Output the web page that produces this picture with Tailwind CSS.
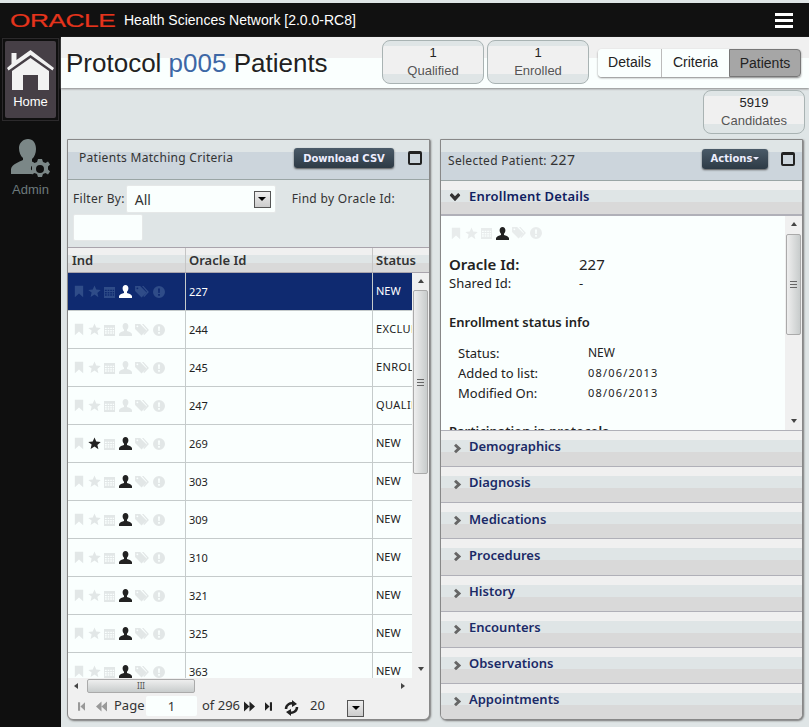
<!DOCTYPE html>
<html lang="en">
<head>
<meta charset="UTF-8">
<title>Health Sciences Network</title>
<script src="https://cdn.jsdelivr.net/npm/@tailwindcss/browser@4"></script>
</head>
<body class="w-[809px] h-[727px] overflow-hidden bg-[#0f0f0f] font-['Liberation_Sans',sans-serif]">
<svg class="hidden">
  <symbol id="bookmark" viewBox="0 0 12 14"><path fill="currentColor" d="M1 0h10v14L6 9.500 1 14z"/></symbol>
  <symbol id="star" viewBox="0 0 14 14"><path fill="currentColor" d="M7 .5l1.900 4.400 4.800.4-3.600 3.200 1.100 4.700L7 10.300l-4.200 2.500 1.100-4.700L.3 5.300l4.800-.4z"/></symbol>
  <symbol id="calendar" viewBox="0 0 12 13"><path fill="currentColor" d="M0 1h12v12H0zM1 4v1.500h2V4zm3 0v1.500h1.800V4zm2.800 0v1.500h1.800V4zm2.700 0v1.500H11V4zM1 6.500V8h2V6.500zm3 0V8h1.800V6.500zm2.800 0V8h1.800V6.500zm2.700 0V8H11V6.500zM1 9v1.500h2V9zm3 0v1.500h1.800V9zm2.800 0v1.500h1.800V9zm2.700 0v1.500H11V9z"/></symbol>
  <symbol id="user" viewBox="0 0 13 13"><path fill="currentColor" d="M6.500 0C8.300 0 9.400 1.300 9.400 3.200c0 1.500-.6 2.800-1.400 3.500v1.200c1.800.6 4.400 1.300 5 3.100v2H0v-2c.6-1.800 3.200-2.500 5-3.100V6.700C4.200 6 3.600 4.700 3.600 3.200 3.600 1.300 4.700 0 6.500 0z"/></symbol>
  <symbol id="tags" viewBox="0 0 15 13"><path fill="currentColor" d="M0 0h5.500l7 7-5.500 5.500-7-7zm2.500 1.500a1 1 0 100 2 1 1 0 000-2zM7.500 0h1.600l5.900 6.500-5 5.500-1-1 4-4.500z"/></symbol>
  <symbol id="alert" viewBox="0 0 12 12"><path fill="currentColor" fill-rule="evenodd" d="M6 0a6 6 0 110 12A6 6 0 016 0zM5 2.500l.3 4.500h1.400L7 2.500zM5.100 8v1.700h1.800V8z"/></symbol>
  <symbol id="chev" viewBox="0 0 10 12"><path fill="currentColor" d="M2.500 0L9 6l-6.500 6L0 9.500 3.700 6 0 2.500z"/></symbol>
  <symbol id="first" viewBox="0 0 10 12"><path fill="currentColor" d="M0 0h3v12H0zM3.500 6L10 0v12z"/></symbol>
  <symbol id="prev" viewBox="0 0 12 12"><path fill="currentColor" d="M0 6l6-5.500v11zM6 6l6-5.500v11z"/></symbol>
</svg>

<!-- top bar -->
<header class="h-[37px] border-t-[3px] border-[#dfe5e6] bg-[#111] flex items-center pl-[10px] pr-[16px] text-white">
  <span class="w-[103px] text-[#e5341c] text-[19px] leading-none origin-left scale-x-[1.38] tracking-[-0.3px] [-webkit-text-stroke:0.2px_#e5341c]">ORACLE</span>
  <span class="ml-[11px] text-[14px]">Health Sciences Network [2.0.0-RC8]</span>
  <div class="ml-auto flex flex-col gap-[3px]">
    <div class="w-[18px] h-[3px] bg-white"></div>
    <div class="w-[18px] h-[3px] bg-white"></div>
    <div class="w-[18px] h-[3px] bg-white"></div>
  </div>
</header>

<div class="flex h-[690px]">
  <!-- side nav -->
  <nav class="w-[61px] shrink-0 bg-[#0f0f0f] pt-[1px]">
    <div class="mx-[2px] h-[83px] border border-[#2c2a2c] p-[2px]">
      <div class="h-full bg-[#463f46] rounded-[2px] flex flex-col items-center pt-[9px] text-white">
        <svg class="w-[47px] h-[40px]" viewBox="0 0 47 40"><path fill="#f2f2f2" d="M23.500 0L9.500 10V3h-5v11L0 18l1.500 2.500L23.500 5l22 15.500L47 18zM23.500 8L5 21v19h11V25h15v15h11V21z"/></svg>
        <span class="text-[13px] mt-[3px] leading-[18px]">Home</span>
      </div>
    </div>
    <div class="flex flex-col items-center mt-[18px] text-[#6d7a7c]">
      <svg class="w-[40px] h-[40px]" viewBox="0 0 40 40"><path fill="#7b8787" d="M17 0c5 0 8 4 8 10 0 4-1.500 8-4 10v3l2 1c-3 2-4 6-2 9l1 2H0v-5c1-5 8-7 12-9v-2c-2.500-2-4-6-4-10C8 4 12 0 17 0z"/><path fill="#7b8787" fill-rule="evenodd" d="M29 21h4l1 3 2.500 1 2.500-1.500 2 3-2 2v3l2 2-2 3-2.500-1.500-2.500 1-1 3h-4l-1-3-2.500-1-2.500 1.500-2-3 2-2v-3l-2-2 2-3 2.500 1.500 2.500-1zm2 6a4 4 0 100 8 4 4 0 000-8z" transform="translate(-2 -1)"/></svg>
      <span class="text-[13px] leading-[18px] mt-[2px]">Admin</span>
    </div>
  </nav>

  <main class="flex-1 min-w-0 bg-[#dfe5e6] text-[#222]">
    <!-- page header -->
    <div class="h-[51px] flex items-center bg-[linear-gradient(#f0f0f0_0,#f0f0f0_21px,#fafffe_21px)] shadow-[0_1px_2px_#8a8a8a] pl-[5px] pr-[8px]">
      <h1 class="w-[316px] text-[26px] leading-none text-[#222]">Protocol <span class="text-[#3d67a5]">p005</span> Patients</h1>
      <div class="-mt-[1px] w-[102px] h-[44px] rounded-[8px] border border-[#a9b3b3] bg-[linear-gradient(#dfe5e6_0,#dfe5e6_5px,#f0f0f0_5px,#f0f0f0_33px,#dfe5e6_33px)] text-center text-[13px] leading-[18px] pt-[3px]">
        <div>1</div><div class="text-[#555]">Qualified</div>
      </div>
      <div class="-mt-[1px] w-[102px] h-[44px] ml-[3px] rounded-[8px] border border-[#a9b3b3] bg-[linear-gradient(#dfe5e6_0,#dfe5e6_5px,#f0f0f0_5px,#f0f0f0_33px,#dfe5e6_33px)] text-center text-[13px] leading-[18px] pt-[3px]">
        <div>1</div><div class="text-[#555]">Enrolled</div>
      </div>
      <div class="ml-[9px] flex h-[28px] rounded-[4px] shadow-[0_1px_2px_#888] text-[14px] leading-[26px] text-center">
        <div class="w-[64px] border-r border-[#bbb] rounded-l-[4px] bg-[#fafffe]">Details</div>
        <div class="w-[67px] bg-[#fafffe]">Criteria</div>
        <div class="w-[72px] rounded-r-[4px] bg-[#a6a6a6] border border-[#777]">Patients</div>
      </div>
    </div>

    <div class="flex justify-end pr-[4px] pt-[2px]">
      <div class="w-[102px] h-[44px] rounded-[8px] border border-[#a9b3b3] bg-[linear-gradient(#dfe5e6_0,#dfe5e6_5px,#f0f0f0_5px,#f0f0f0_33px,#dfe5e6_33px)] text-center text-[13px] leading-[18px] pt-[3px]">
        <div>5919</div><div class="text-[#555]">Candidates</div>
      </div>
    </div>

    <div class="flex gap-[10px] pl-[6px] pt-[5px] font-['Noto_Sans',sans-serif]">
      <!-- left panel -->
      <section class="w-[363px] h-[581px] flex flex-col border border-[#888] rounded-b-[6px] bg-[#f0f0f0] shadow-[1px_1px_2px_#777] overflow-hidden">
        <div class="h-[40px] shrink-0 flex items-center pl-[11px] pr-[7px] pb-[3px] border-b border-[#9aa5a5] bg-[linear-gradient(#dfe5e6_0,#dfe5e6_12px,#ccd5dc_12px)]">
          <span class="text-[12px] tracking-[0.3px] text-[#333]">Patients Matching Criteria</span>
          <button class="ml-auto w-[100px] h-[20px] rounded-[3px] bg-[linear-gradient(#4a5a68,#2d3a45)] text-[#eef] text-[10px] font-bold font-['DejaVu_Sans',sans-serif] shadow-[0_1px_2px_#555]">Download CSV</button>
          <div class="ml-[14px] w-[14px] h-[14px] rounded-[2px] border-[2px] border-t-[3px] border-[#222]"></div>
        </div>
        <div class="h-[67px] shrink-0 bg-[#dfe5e6] pl-[5px] pt-[5px]">
          <div class="flex items-center text-[12px] tracking-[0.3px] text-[#333]">
            <span>Filter By:</span>
            <div class="ml-[1px] w-[150px] h-[28px] flex items-center pl-[8px] pr-[4px] bg-[#fafffe] rounded-[2px] border border-[#e5e8e8] text-[14px] tracking-normal">
              All
              <div class="ml-auto w-[17px] h-[17px] border border-[#555] bg-[linear-gradient(#eee,#ccc)] flex items-center justify-center"><div class="border-x-[4px] border-x-transparent border-t-[4px] border-t-black"></div></div>
            </div>
            <span class="ml-[16px]">Find by Oracle Id:</span>
          </div>
          <div class="mt-[1px] w-[70px] h-[27px] bg-[#fafffe] rounded-[2px] border border-[#e5e8e8]"></div>
        </div>

        <!-- grid header -->
        <div class="h-[26px] shrink-0 flex border-y border-[#a9a4ac] bg-[linear-gradient(#f0f0f0_0,#f0f0f0_7px,#dfe5e6_7px,#dfe5e6_15px,#d9d9d9_15px)] text-[13px] font-semibold leading-[24px] text-[#333]">
          <div class="w-[118px] pl-[4px] border-r border-[#c5c5c5]">Ind</div>
          <div class="w-[187px] pl-[3px] border-r border-[#c5c5c5]">Oracle Id</div>
          <div class="flex-1 pl-[3px]">Status</div>
        </div>

        <!-- grid body -->
        <div class="h-[405px] shrink-0 flex bg-[#fafffe] text-[11px] overflow-hidden">
          <div class="w-[344px] shrink-0">
            <div class="h-[38px] flex items-center bg-[#0f2a70] text-white border-b border-[#c5cbcb]">
              <div class="w-[118px] h-full shrink-0 flex items-center gap-[3.6px] pl-[6px] border-r border-[#c5cbcb] text-[#2f4c88]">
                <svg class="w-[10px] h-[13px]"><use href="#bookmark"/></svg><svg class="w-[13px] h-[13px]"><use href="#star"/></svg><svg class="w-[11px] h-[12px]"><use href="#calendar"/></svg><svg class="w-[13px] h-[13px] text-white"><use href="#user"/></svg><svg class="w-[14px] h-[12px]"><use href="#tags"/></svg><svg class="w-[12px] h-[12px]"><use href="#alert"/></svg>
              </div>
              <div class="w-[187px] h-full shrink-0 leading-[38px] pl-[3px] border-r border-[#c5cbcb]">227</div>
              <div class="pl-[3px]">NEW</div>
            </div>
            <div class="h-[38px] flex items-center border-b border-[#c5cbcb]">
              <div class="w-[118px] h-full shrink-0 flex items-center gap-[3.6px] pl-[6px] border-r border-[#c5cbcb] text-[#e2e7e7]">
                <svg class="w-[10px] h-[13px]"><use href="#bookmark"/></svg><svg class="w-[13px] h-[13px]"><use href="#star"/></svg><svg class="w-[11px] h-[12px]"><use href="#calendar"/></svg><svg class="w-[13px] h-[13px]"><use href="#user"/></svg><svg class="w-[14px] h-[12px]"><use href="#tags"/></svg><svg class="w-[12px] h-[12px]"><use href="#alert"/></svg>
              </div>
              <div class="w-[187px] h-full shrink-0 leading-[38px] pl-[3px] border-r border-[#c5cbcb]">244</div>
              <div class="pl-[3px] whitespace-nowrap overflow-hidden tracking-[0.4px]">EXCLUDED</div>
            </div>
            <div class="h-[38px] flex items-center border-b border-[#c5cbcb]">
              <div class="w-[118px] h-full shrink-0 flex items-center gap-[3.6px] pl-[6px] border-r border-[#c5cbcb] text-[#e2e7e7]">
                <svg class="w-[10px] h-[13px]"><use href="#bookmark"/></svg><svg class="w-[13px] h-[13px]"><use href="#star"/></svg><svg class="w-[11px] h-[12px]"><use href="#calendar"/></svg><svg class="w-[13px] h-[13px]"><use href="#user"/></svg><svg class="w-[14px] h-[12px]"><use href="#tags"/></svg><svg class="w-[12px] h-[12px]"><use href="#alert"/></svg>
              </div>
              <div class="w-[187px] h-full shrink-0 leading-[38px] pl-[3px] border-r border-[#c5cbcb]">245</div>
              <div class="pl-[3px] whitespace-nowrap overflow-hidden tracking-[0.4px]">ENROLLED</div>
            </div>
            <div class="h-[38px] flex items-center border-b border-[#c5cbcb]">
              <div class="w-[118px] h-full shrink-0 flex items-center gap-[3.6px] pl-[6px] border-r border-[#c5cbcb] text-[#e2e7e7]">
                <svg class="w-[10px] h-[13px]"><use href="#bookmark"/></svg><svg class="w-[13px] h-[13px]"><use href="#star"/></svg><svg class="w-[11px] h-[12px]"><use href="#calendar"/></svg><svg class="w-[13px] h-[13px]"><use href="#user"/></svg><svg class="w-[14px] h-[12px]"><use href="#tags"/></svg><svg class="w-[12px] h-[12px]"><use href="#alert"/></svg>
              </div>
              <div class="w-[187px] h-full shrink-0 leading-[38px] pl-[3px] border-r border-[#c5cbcb]">247</div>
              <div class="pl-[3px] whitespace-nowrap overflow-hidden tracking-[0.4px]">QUALIFIED</div>
            </div>
            <div class="h-[38px] flex items-center border-b border-[#c5cbcb]">
              <div class="w-[118px] h-full shrink-0 flex items-center gap-[3.6px] pl-[6px] border-r border-[#c5cbcb] text-[#e2e7e7]">
                <svg class="w-[10px] h-[13px]"><use href="#bookmark"/></svg><svg class="w-[13px] h-[13px] text-[#222]"><use href="#star"/></svg><svg class="w-[11px] h-[12px]"><use href="#calendar"/></svg><svg class="w-[13px] h-[13px] text-[#222]"><use href="#user"/></svg><svg class="w-[14px] h-[12px]"><use href="#tags"/></svg><svg class="w-[12px] h-[12px]"><use href="#alert"/></svg>
              </div>
              <div class="w-[187px] h-full shrink-0 leading-[38px] pl-[3px] border-r border-[#c5cbcb]">269</div>
              <div class="pl-[3px]">NEW</div>
            </div>
            <div class="h-[38px] flex items-center border-b border-[#c5cbcb]">
              <div class="w-[118px] h-full shrink-0 flex items-center gap-[3.6px] pl-[6px] border-r border-[#c5cbcb] text-[#e2e7e7]">
                <svg class="w-[10px] h-[13px]"><use href="#bookmark"/></svg><svg class="w-[13px] h-[13px]"><use href="#star"/></svg><svg class="w-[11px] h-[12px]"><use href="#calendar"/></svg><svg class="w-[13px] h-[13px] text-[#222]"><use href="#user"/></svg><svg class="w-[14px] h-[12px]"><use href="#tags"/></svg><svg class="w-[12px] h-[12px]"><use href="#alert"/></svg>
              </div>
              <div class="w-[187px] h-full shrink-0 leading-[38px] pl-[3px] border-r border-[#c5cbcb]">303</div>
              <div class="pl-[3px]">NEW</div>
            </div>
            <div class="h-[38px] flex items-center border-b border-[#c5cbcb]">
              <div class="w-[118px] h-full shrink-0 flex items-center gap-[3.6px] pl-[6px] border-r border-[#c5cbcb] text-[#e2e7e7]">
                <svg class="w-[10px] h-[13px]"><use href="#bookmark"/></svg><svg class="w-[13px] h-[13px]"><use href="#star"/></svg><svg class="w-[11px] h-[12px]"><use href="#calendar"/></svg><svg class="w-[13px] h-[13px] text-[#222]"><use href="#user"/></svg><svg class="w-[14px] h-[12px]"><use href="#tags"/></svg><svg class="w-[12px] h-[12px]"><use href="#alert"/></svg>
              </div>
              <div class="w-[187px] h-full shrink-0 leading-[38px] pl-[3px] border-r border-[#c5cbcb]">309</div>
              <div class="pl-[3px]">NEW</div>
            </div>
            <div class="h-[38px] flex items-center border-b border-[#c5cbcb]">
              <div class="w-[118px] h-full shrink-0 flex items-center gap-[3.6px] pl-[6px] border-r border-[#c5cbcb] text-[#e2e7e7]">
                <svg class="w-[10px] h-[13px]"><use href="#bookmark"/></svg><svg class="w-[13px] h-[13px]"><use href="#star"/></svg><svg class="w-[11px] h-[12px]"><use href="#calendar"/></svg><svg class="w-[13px] h-[13px] text-[#222]"><use href="#user"/></svg><svg class="w-[14px] h-[12px]"><use href="#tags"/></svg><svg class="w-[12px] h-[12px]"><use href="#alert"/></svg>
              </div>
              <div class="w-[187px] h-full shrink-0 leading-[38px] pl-[3px] border-r border-[#c5cbcb]">310</div>
              <div class="pl-[3px]">NEW</div>
            </div>
            <div class="h-[38px] flex items-center border-b border-[#c5cbcb]">
              <div class="w-[118px] h-full shrink-0 flex items-center gap-[3.6px] pl-[6px] border-r border-[#c5cbcb] text-[#e2e7e7]">
                <svg class="w-[10px] h-[13px]"><use href="#bookmark"/></svg><svg class="w-[13px] h-[13px]"><use href="#star"/></svg><svg class="w-[11px] h-[12px]"><use href="#calendar"/></svg><svg class="w-[13px] h-[13px] text-[#222]"><use href="#user"/></svg><svg class="w-[14px] h-[12px]"><use href="#tags"/></svg><svg class="w-[12px] h-[12px]"><use href="#alert"/></svg>
              </div>
              <div class="w-[187px] h-full shrink-0 leading-[38px] pl-[3px] border-r border-[#c5cbcb]">321</div>
              <div class="pl-[3px]">NEW</div>
            </div>
            <div class="h-[38px] flex items-center border-b border-[#c5cbcb]">
              <div class="w-[118px] h-full shrink-0 flex items-center gap-[3.6px] pl-[6px] border-r border-[#c5cbcb] text-[#e2e7e7]">
                <svg class="w-[10px] h-[13px]"><use href="#bookmark"/></svg><svg class="w-[13px] h-[13px]"><use href="#star"/></svg><svg class="w-[11px] h-[12px]"><use href="#calendar"/></svg><svg class="w-[13px] h-[13px] text-[#222]"><use href="#user"/></svg><svg class="w-[14px] h-[12px]"><use href="#tags"/></svg><svg class="w-[12px] h-[12px]"><use href="#alert"/></svg>
              </div>
              <div class="w-[187px] h-full shrink-0 leading-[38px] pl-[3px] border-r border-[#c5cbcb]">325</div>
              <div class="pl-[3px]">NEW</div>
            </div>
            <div class="h-[38px] flex items-center border-b border-[#c5cbcb]">
              <div class="w-[118px] h-full shrink-0 flex items-center gap-[3.6px] pl-[6px] border-r border-[#c5cbcb] text-[#e2e7e7]">
                <svg class="w-[10px] h-[13px]"><use href="#bookmark"/></svg><svg class="w-[13px] h-[13px]"><use href="#star"/></svg><svg class="w-[11px] h-[12px]"><use href="#calendar"/></svg><svg class="w-[13px] h-[13px] text-[#222]"><use href="#user"/></svg><svg class="w-[14px] h-[12px]"><use href="#tags"/></svg><svg class="w-[12px] h-[12px]"><use href="#alert"/></svg>
              </div>
              <div class="w-[187px] h-full shrink-0 leading-[38px] pl-[3px] border-r border-[#c5cbcb]">363</div>
              <div class="pl-[3px]">NEW</div>
            </div>
          </div>
          <!-- vertical scrollbar -->
          <div class="flex-1 bg-[#f0f0f0] flex flex-col items-center">
            <div class="h-[17px] pt-[6px]"><div class="border-x-[3px] border-x-transparent border-b-[4px] border-b-[#444]"></div></div>
            <div class="w-[15px] h-[184px] rounded-[2px] border border-[#aaa] bg-[linear-gradient(90deg,#eee,#c8cccc)] flex items-center justify-center"><div class="w-[7px] h-[7px] border-y border-[#666] bg-[linear-gradient(transparent_2px,#666_2px,#666_3px,transparent_3px)]"></div></div>
            <div class="mt-auto h-[14px] pt-[3px]"><div class="border-x-[3px] border-x-transparent border-t-[4px] border-t-[#444]"></div></div>
          </div>
        </div>

        <!-- horizontal scrollbar -->
        <div class="h-[15px] shrink-0 flex items-center pl-[6px] pr-[24px]">
          <div class="border-y-[3px] border-y-transparent border-r-[4px] border-r-[#444]"></div>
          <div class="ml-[9px] w-[108px] h-[14px] rounded-[2px] border border-[#aaa] bg-[linear-gradient(#eee,#c8cccc)] text-center text-[8px] leading-[11px] text-[#555]">III</div>
          <div class="ml-auto border-y-[3px] border-y-transparent border-l-[4px] border-l-[#444]"></div>
        </div>

        <!-- pager -->
        <div class="flex-1 flex items-center pl-[10px] text-[13px] text-[#333]">
          <svg class="w-[7px] h-[11px] text-[#999]"><use href="#first"/></svg>
          <svg class="ml-[11px] w-[11px] h-[11px] text-[#999]"><use href="#prev"/></svg>
          <span class="ml-[7px] w-[28px]">Page</span>
          <div class="ml-[4px] w-[51px] h-[20px] rounded-[2px] bg-[#fafffe] text-center leading-[20px]">1</div>
          <span class="ml-[5px] w-[37px] whitespace-nowrap">of 296</span>
          <svg class="ml-[5px] w-[11px] h-[11px] text-[#222] rotate-180"><use href="#prev"/></svg>
          <svg class="ml-[10px] w-[7px] h-[11px] text-[#222] rotate-180"><use href="#first"/></svg>
          <svg class="ml-[12px] w-[15px] h-[16px] mt-[3px]" viewBox="0 0 15 16"><path fill="none" stroke="#222" stroke-width="2.500" d="M2 9a5.500 5.500 0 018-5M13 7a5.500 5.500 0 01-8 5"/><path fill="#222" d="M8 0l5 4-5 3zM7 16l-5-4 5-3z"/></svg>
          <span class="ml-[11px] w-[14px]">20</span>
          <div class="ml-[23px] w-[17px] h-[17px] mt-[4px] border border-[#555] bg-[linear-gradient(#eee,#ccc)] flex items-center justify-center"><div class="border-x-[4px] border-x-transparent border-t-[4px] border-t-black"></div></div>
        </div>
      </section>

      <!-- right panel -->
      <section class="w-[363px] h-[581px] flex flex-col border border-[#888] rounded-b-[6px] bg-[#f0f0f0] shadow-[1px_1px_2px_#777] overflow-hidden">
        <div class="h-[41px] shrink-0 flex items-center pl-[7px] pr-[7px] pb-[3px] border-b border-[#9aa5a5] bg-[linear-gradient(#dfe5e6_0,#dfe5e6_12px,#ccd5dc_12px)]">
          <span class="text-[12px] tracking-[0.3px] text-[#333] pt-[1px]">Selected Patient: <span class="text-[14px]">227</span></span>
          <button class="ml-auto w-[66px] h-[20px] flex items-center justify-center gap-[1px] rounded-[3px] bg-[linear-gradient(#4a5a68,#2d3a45)] text-[#eef] text-[10px] font-bold font-['DejaVu_Sans',sans-serif] shadow-[0_1px_2px_#555]">Actions<span class="border-x-[3px] border-x-transparent border-t-[3px] border-t-[#eef]"></span></button>
          <div class="ml-[13px] w-[14px] h-[14px] rounded-[2px] border-[2px] border-t-[3px] border-[#222]"></div>
        </div>
        <div class="h-[35px] shrink-0 flex items-center pl-[9px] border-b-2 border-[#b0b0b8] bg-[linear-gradient(#f0f0f0_0,#f0f0f0_9px,#dfe5e6_9px,#dfe5e6_21px,#d9d9d9_21px)] font-semibold text-[13px] tracking-[0.2px] text-[#0f2060]">
          <svg class="w-[10px] h-[11px] text-[#333] rotate-90"><use href="#chev"/></svg><span class="ml-[9px] -mt-[1px]">Enrollment Details</span>
        </div>
        <div class="h-[214px] shrink-0 flex bg-[#fafffe] text-[#222] overflow-hidden">
          <div class="flex-1 pl-[8px] pt-[9px] text-[13px]">
            <div class="flex items-center gap-[3.6px] ml-[2px] text-[#e8ecec] h-[16px]">
              <svg class="w-[10px] h-[13px]"><use href="#bookmark"/></svg><svg class="w-[13px] h-[13px]"><use href="#star"/></svg><svg class="w-[11px] h-[12px]"><use href="#calendar"/></svg><svg class="w-[13px] h-[13px] text-[#222]"><use href="#user"/></svg><svg class="w-[14px] h-[12px]"><use href="#tags"/></svg><svg class="w-[12px] h-[12px]"><use href="#alert"/></svg>
            </div>
            <div class="flex mt-[13px] text-[15px] leading-[20px]"><span class="w-[130px] font-semibold">Oracle Id:</span><span>227</span></div>
            <div class="flex leading-[18px]"><span class="w-[130px]">Shared Id:</span><span>-</span></div>
            <div class="mt-[21px] font-semibold leading-[18px]">Enrollment status info</div>
            <div class="mt-[12px] pl-[9px] leading-[20px]">
              <div class="flex"><span class="w-[130px]">Status:</span><span class="text-[12px]">NEW</span></div>
              <div class="flex"><span class="w-[130px]">Added to list:</span><span class="text-[11px] tracking-[1.2px]">08/06/2013</span></div>
              <div class="flex"><span class="w-[130px]">Modified On:</span><span class="text-[11px] tracking-[1.2px]">08/06/2013</span></div>
            </div>
            <div class="mt-[19px] font-semibold leading-[18px]">Participation in protocols</div>
          </div>
          <div class="w-[17px] bg-[#f0f0f0] flex flex-col items-center">
            <div class="h-[18px] pt-[6px]"><div class="border-x-[3px] border-x-transparent border-b-[4px] border-b-[#444]"></div></div>
            <div class="w-[15px] h-[101px] rounded-[2px] border border-[#aaa] bg-[linear-gradient(90deg,#eee,#c8cccc)] flex items-center justify-center"><div class="w-[7px] h-[7px] border-y border-[#666] bg-[linear-gradient(transparent_2px,#666_2px,#666_3px,transparent_3px)]"></div></div>
            <div class="mt-auto h-[14px] pt-[3px]"><div class="border-x-[3px] border-x-transparent border-t-[4px] border-t-[#444]"></div></div>
          </div>
        </div>
        <div class="flex-1 flex flex-col font-semibold text-[13px] text-[#1b2a66]">
          <div class="flex-1 flex items-center pl-[13px] border-y border-[#b0b0b8] bg-[linear-gradient(#f0f0f0_0,#f0f0f0_9px,#dfe5e6_9px,#dfe5e6_21px,#d9d9d9_21px)]"><svg class="w-[8px] h-[11px] text-[#666]"><use href="#chev"/></svg><span class="ml-[7px] -mt-[3px]">Demographics</span></div>
          <div class="flex-1 flex items-center pl-[13px] border-b border-[#b0b0b8] bg-[linear-gradient(#f0f0f0_0,#f0f0f0_9px,#dfe5e6_9px,#dfe5e6_21px,#d9d9d9_21px)]"><svg class="w-[8px] h-[11px] text-[#666]"><use href="#chev"/></svg><span class="ml-[7px] -mt-[3px]">Diagnosis</span></div>
          <div class="flex-1 flex items-center pl-[13px] border-b border-[#b0b0b8] bg-[linear-gradient(#f0f0f0_0,#f0f0f0_9px,#dfe5e6_9px,#dfe5e6_21px,#d9d9d9_21px)]"><svg class="w-[8px] h-[11px] text-[#666]"><use href="#chev"/></svg><span class="ml-[7px] -mt-[3px]">Medications</span></div>
          <div class="flex-1 flex items-center pl-[13px] border-b border-[#b0b0b8] bg-[linear-gradient(#f0f0f0_0,#f0f0f0_9px,#dfe5e6_9px,#dfe5e6_21px,#d9d9d9_21px)]"><svg class="w-[8px] h-[11px] text-[#666]"><use href="#chev"/></svg><span class="ml-[7px] -mt-[3px]">Procedures</span></div>
          <div class="flex-1 flex items-center pl-[13px] border-b border-[#b0b0b8] bg-[linear-gradient(#f0f0f0_0,#f0f0f0_9px,#dfe5e6_9px,#dfe5e6_21px,#d9d9d9_21px)]"><svg class="w-[8px] h-[11px] text-[#666]"><use href="#chev"/></svg><span class="ml-[7px] -mt-[3px]">History</span></div>
          <div class="flex-1 flex items-center pl-[13px] border-b border-[#b0b0b8] bg-[linear-gradient(#f0f0f0_0,#f0f0f0_9px,#dfe5e6_9px,#dfe5e6_21px,#d9d9d9_21px)]"><svg class="w-[8px] h-[11px] text-[#666]"><use href="#chev"/></svg><span class="ml-[7px] -mt-[3px]">Encounters</span></div>
          <div class="flex-1 flex items-center pl-[13px] border-b border-[#b0b0b8] bg-[linear-gradient(#f0f0f0_0,#f0f0f0_9px,#dfe5e6_9px,#dfe5e6_21px,#d9d9d9_21px)]"><svg class="w-[8px] h-[11px] text-[#666]"><use href="#chev"/></svg><span class="ml-[7px] -mt-[3px]">Observations</span></div>
          <div class="flex-1 flex items-center pl-[13px] bg-[linear-gradient(#f0f0f0_0,#f0f0f0_9px,#dfe5e6_9px,#dfe5e6_21px,#d9d9d9_21px)]"><svg class="w-[8px] h-[11px] text-[#666]"><use href="#chev"/></svg><span class="ml-[7px] -mt-[3px]">Appointments</span></div>
        </div>
      </section>
    </div>
  </main>
</div>
</body>
</html>
